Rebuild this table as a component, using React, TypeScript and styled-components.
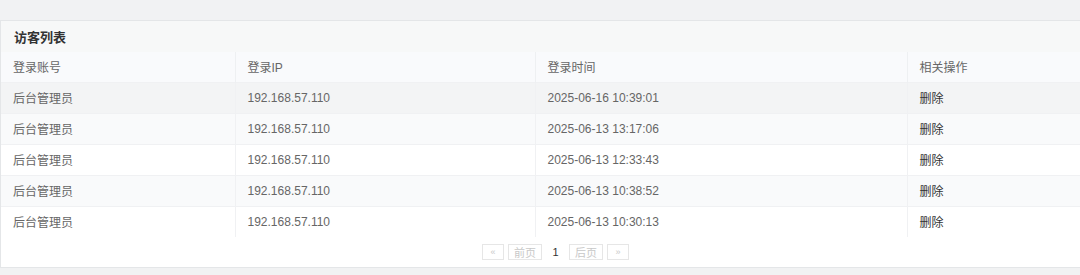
import { createGlobalStyle } from 'styled-components'
import styled from 'styled-components'

const GlobalStyle = createGlobalStyle`
  html, body {
    margin: 0;
    padding: 0;
    background: #f1f2f3;
    font-family: "Liberation Sans", "Noto Sans CJK SC", sans-serif;
    overflow: hidden;
  }
`

const Page = styled.div`
  padding-top: 20px;
  width: 1080px;
  height: 275px;
  box-sizing: border-box;
`

const Panel = styled.div`
  width: 1100px;
  background: #ffffff;
  border: 1px solid #e4e6e8;
  border-right: none;
  box-sizing: border-box;
`

const PanelTitle = styled.div`
  height: 31px;
  display: flex;
  align-items: center;
  padding-left: 13px;
  background: #f7f8f8;
  font-size: 13px;
  font-weight: bold;
  color: #333333;
`

const Table = styled.table`
  width: 1079px;
  border-collapse: collapse;
  table-layout: fixed;
  font-size: 12px;
`

const Col = styled.col<{ $w?: number }>`
  width: ${p => (p.$w ? `${p.$w}px` : 'auto')};
`

const HeadCell = styled.th`
  height: 30px;
  padding: 0 0 0 12px;
  box-sizing: border-box;
  text-align: left;
  font-weight: normal;
  color: #666666;
  background: #f9fafc;
  border-left: 1px solid #eef0f2;
  &:first-child {
    border-left: none;
  }
`

const Row = styled.tr<{ $tone: 'hover' | 'stripe' | 'plain' }>`
  background: ${p => (p.$tone === 'hover' ? '#f3f4f5' : p.$tone === 'stripe' ? '#f9fafb' : '#ffffff')};
`

const Cell = styled.td<{ $dark?: boolean }>`
  height: 31px;
  box-sizing: border-box;
  padding: 0 0 0 12px;
  color: ${p => (p.$dark ? '#333333' : '#666666')};
  border-top: 1px solid #f0f1f3;
  border-left: 1px solid #f0f1f3;
  &:first-child {
    border-left: none;
  }
`

const Pager = styled.div`
  display: flex;
  justify-content: center;
  align-items: center;
  gap: 4px;
  padding: 7px 0 7px 31px;
  width: 1080px;
  box-sizing: border-box;
  margin-left: -1px;
`

const PageButton = styled.span<{ $wide?: boolean }>`
  display: inline-flex;
  align-items: center;
  justify-content: center;
  height: 16px;
  width: ${p => (p.$wide ? '34px' : '22px')};
  box-sizing: border-box;
  border: 1px solid #e6e6e6;
  color: #c8c8c8;
  font-size: ${p => (p.$wide ? '11px' : '9px')};
`

const CurrentPage = styled.span`
  display: inline-block;
  width: 19px;
  text-align: center;
  font-size: 11px;
  color: #333333;
`

const rows = [
  '2025-06-16 10:39:01',
  '2025-06-13 13:17:06',
  '2025-06-13 12:33:43',
  '2025-06-13 10:38:52',
  '2025-06-13 10:30:13',
]

export default function App() {
  return (
    <>
      <GlobalStyle />
      <Page>
        <Panel>
          <PanelTitle>访客列表</PanelTitle>
          <Table>
            <colgroup>
              <Col $w={234} />
              <Col $w={300} />
              <Col $w={372} />
              <Col />
            </colgroup>
            <thead>
              <tr>
                <HeadCell>登录账号</HeadCell>
                <HeadCell>登录IP</HeadCell>
                <HeadCell>登录时间</HeadCell>
                <HeadCell>相关操作</HeadCell>
              </tr>
            </thead>
            <tbody>
              {rows.map((time, i) => (
                <Row key={time} $tone={i === 0 ? 'hover' : i % 2 === 1 ? 'stripe' : 'plain'}>
                  <Cell>后台管理员</Cell>
                  <Cell>192.168.57.110</Cell>
                  <Cell>{time}</Cell>
                  <Cell $dark>删除</Cell>
                </Row>
              ))}
            </tbody>
          </Table>
          <Pager>
            <PageButton>«</PageButton>
            <PageButton $wide>前页</PageButton>
            <CurrentPage>1</CurrentPage>
            <PageButton $wide>后页</PageButton>
            <PageButton>»</PageButton>
          </Pager>
        </Panel>
      </Page>
    </>
  )
}
